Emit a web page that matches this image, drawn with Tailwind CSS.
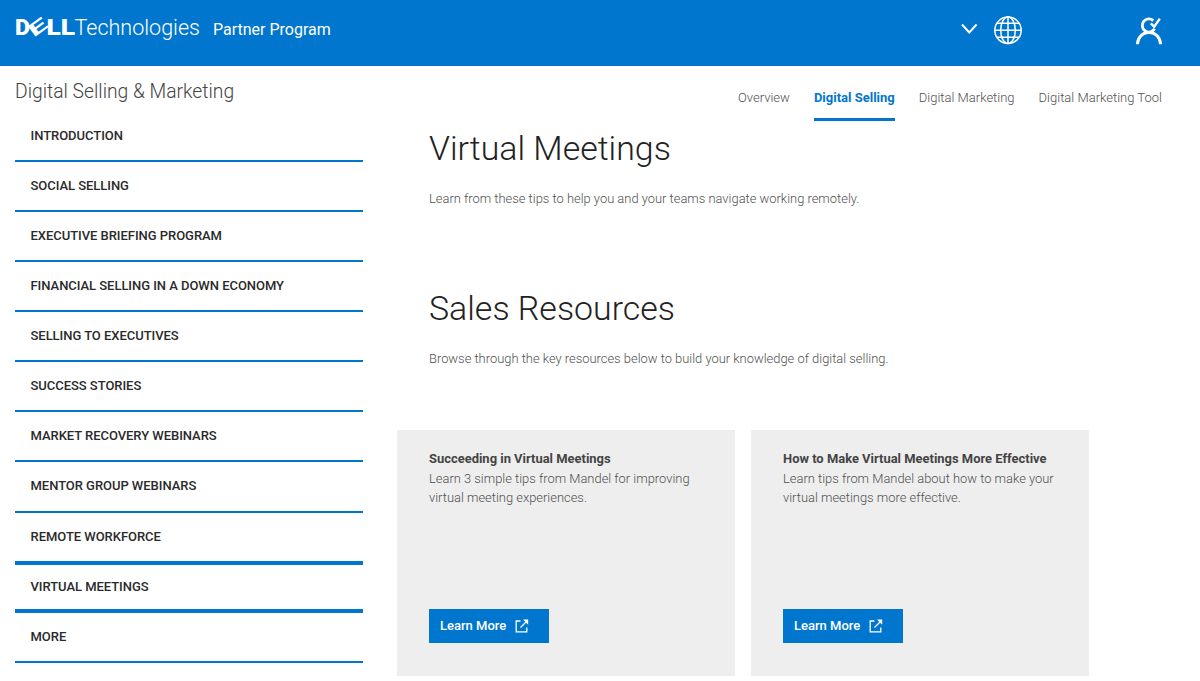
<!DOCTYPE html>
<html lang="en">
<head>
  <meta charset="UTF-8">
  <meta name="viewport" content="width=device-width, initial-scale=1.0">
  <title>Digital Selling &amp; Marketing | Partner Program</title>
  <script src="https://cdn.jsdelivr.net/npm/@tailwindcss/browser@4"></script>
</head>
<body class="bg-white font-['Roboto',sans-serif] text-[#505050] h-[681px] overflow-hidden">
  <!-- Header -->
  <header class="bg-[#0076ce] h-[66px] flex items-start text-white">
    <svg class="w-[190px] h-[42px] ml-[15px] mt-[4px] shrink-0 overflow-visible" viewBox="15 4 190 42" fill="#fff" font-family="Roboto, sans-serif">
      <text x="15" y="34.6" font-size="22.5" font-weight="900" textLength="15" lengthAdjust="spacingAndGlyphs">D</text>
      <text x="-9.2" y="6.2" font-size="18" font-weight="700" transform="translate(37.6 27.4) rotate(-36)" textLength="19" lengthAdjust="spacingAndGlyphs">E</text>
      <text x="46.5" y="34.6" font-size="22.5" font-weight="900" textLength="28.5" lengthAdjust="spacingAndGlyphs">LL</text>
      <text x="74.5" y="34.6" font-size="22.5" font-weight="300" textLength="125.5" lengthAdjust="spacingAndGlyphs">Technologies</text>
    </svg>
    <span class="ml-[8px] mt-[18px] text-[16px] leading-[24px]">Partner Program</span>
    <div class="ml-auto flex items-start">
      <svg class="w-[17px] h-[12px] mt-[23px]" viewBox="0 0 17 12" fill="none" stroke="#fff" stroke-width="2">
        <path d="M1 1.5l7.3 8 7.3-8" />
      </svg>
      <svg class="w-[30px] h-[30px] mt-[15px] ml-[15px]" viewBox="0 0 30 30" fill="none" stroke="#fff" stroke-width="1.5">
        <circle cx="15" cy="15.3" r="13.2" />
        <ellipse cx="15" cy="15.3" rx="7.3" ry="13.2" />
        <path d="M15 2v26.5M1.8 15.3h26.4M4 8.3h22M4 22.3h22" />
      </svg>
      <svg class="w-[28px] h-[30px] mt-[16px] ml-[112px] mr-[37px]" viewBox="0 0 28 30" fill="none" stroke="#fff" stroke-width="3">
        <path d="M2.5 28.3c0-6.5 4.6-11.9 11.5-11.9s11.5 5.4 11.5 11.9" />
        <path d="M18.3 4.6a6.6 6.6 0 1 0 1.3 8.2" stroke-width="2.8" />
        <path d="M15.8 7.3l3.4 3.3 5.6-7.8" stroke-width="2.4" />
      </svg>
    </div>
  </header>

  <div class="flex">
    <!-- Side navigation -->
    <aside class="w-[348px] ml-[15px] pt-[13px] shrink-0">
      <h2 class="text-[19.3px] leading-[26px] font-light text-[#444] mb-[7px]">Digital Selling &amp; Marketing</h2>
      <nav class="text-[13px] leading-[20px] font-medium text-[#2a2a2a] tracking-[-0.04px]">
        <a class="block h-[50px] border-b-2 border-[#0076ce] pl-[15.5px] pt-[14px]">INTRODUCTION</a>
        <a class="block h-[50px] border-b-2 border-[#0076ce] pl-[15.5px] pt-[14px]">SOCIAL SELLING</a>
        <a class="block h-[50px] border-b-2 border-[#0076ce] pl-[15.5px] pt-[14px]">EXECUTIVE BRIEFING PROGRAM</a>
        <a class="block h-[50px] border-b-2 border-[#0076ce] pl-[15.5px] pt-[14px]">FINANCIAL SELLING IN A DOWN ECONOMY</a>
        <a class="block h-[50px] border-b-2 border-[#0076ce] pl-[15.5px] pt-[14px]">SELLING TO EXECUTIVES</a>
        <a class="block h-[50px] border-b-2 border-[#0076ce] pl-[15.5px] pt-[14px]">SUCCESS STORIES</a>
        <a class="block h-[50px] border-b-2 border-[#0076ce] pl-[15.5px] pt-[14px]">MARKET RECOVERY WEBINARS</a>
        <a class="block h-[51px] border-b-2 border-[#0076ce] pl-[15.5px] pt-[14px]">MENTOR GROUP WEBINARS</a>
        <a class="block h-[48px] pl-[15.5px] pt-[14px]">REMOTE WORKFORCE</a>
        <a class="block h-[52px] border-y-4 border-[#0076ce] pl-[15.5px] pt-[12px]">VIRTUAL MEETINGS</a>
        <a class="block h-[50px] border-b-2 border-[#0076ce] pl-[15.5px] pt-[14px]">MORE</a>
      </nav>
    </aside>

    <main class="flex-1 ml-[34px]">
      <!-- Section tabs -->
      <nav class="flex justify-end gap-[24px] pr-[38px] pt-[22px] text-[13px] leading-[20px] font-light">
        <a>Overview</a>
        <a class="h-[33px] border-b-[3px] border-[#0076ce] font-bold text-[#0076ce]">Digital Selling</a>
        <a>Digital Marketing</a>
        <a>Digital Marketing Tool</a>
      </nav>

      <section class="pl-[32px] h-[160px]">
        <h1 class="pt-[8px] text-[33.9px] leading-[40px] font-light text-[#222]">Virtual Meetings</h1>
        <p class="mt-[20px] text-[12.92px] leading-[20px] font-light">Learn from these tips to help you and your teams navigate working remotely.</p>
      </section>
      <section class="pl-[32px] h-[149px]">
        <h1 class="pt-[8px] text-[33.9px] leading-[40px] font-light text-[#222]">Sales Resources</h1>
        <p class="mt-[20px] text-[12.92px] leading-[20px] font-light">Browse through the key resources below to build your knowledge of digital selling.</p>
      </section>

      <!-- Resource cards -->
      <div class="flex gap-4">
        <article class="w-[338px] h-[246px] bg-[#eee] px-[32px] pt-[19px] pb-[33px] flex flex-col">
          <h3 class="text-[12.95px] leading-[19.5px] font-bold text-[#444]">Succeeding in Virtual Meetings</h3>
          <p class="text-[12.92px] leading-[19.5px] font-light">Learn 3 simple tips from Mandel for improving<br>virtual meeting experiences.</p>
          <a class="mt-auto w-[120px] h-[34px] pl-[11px] bg-[#0076ce] text-white text-[13px] font-medium flex items-center">
            <span>Learn More</span>
            <svg class="w-[14px] h-[14px] ml-[9px]" viewBox="0 0 14 14" fill="none" stroke="#fff" stroke-width="1.3">
              <path d="M5.5 2H1.2v10.8h10.6V8.5M5.5 8.5L12 2" />
              <path d="M8 .5h5.2v5.2z" fill="#fff" stroke="none" />
            </svg>
          </a>
        </article>
        <article class="w-[338px] h-[246px] bg-[#eee] px-[32px] pt-[19px] pb-[33px] flex flex-col">
          <h3 class="text-[12.95px] leading-[19.5px] font-bold text-[#444]">How to Make Virtual Meetings More Effective</h3>
          <p class="text-[12.92px] leading-[19.5px] font-light">Learn tips from Mandel about how to make your<br>virtual meetings more effective.</p>
          <a class="mt-auto w-[120px] h-[34px] pl-[11px] bg-[#0076ce] text-white text-[13px] font-medium flex items-center">
            <span>Learn More</span>
            <svg class="w-[14px] h-[14px] ml-[9px]" viewBox="0 0 14 14" fill="none" stroke="#fff" stroke-width="1.3">
              <path d="M5.5 2H1.2v10.8h10.6V8.5M5.5 8.5L12 2" />
              <path d="M8 .5h5.2v5.2z" fill="#fff" stroke="none" />
            </svg>
          </a>
        </article>
      </div>
    </main>
  </div>
</body>
</html>
